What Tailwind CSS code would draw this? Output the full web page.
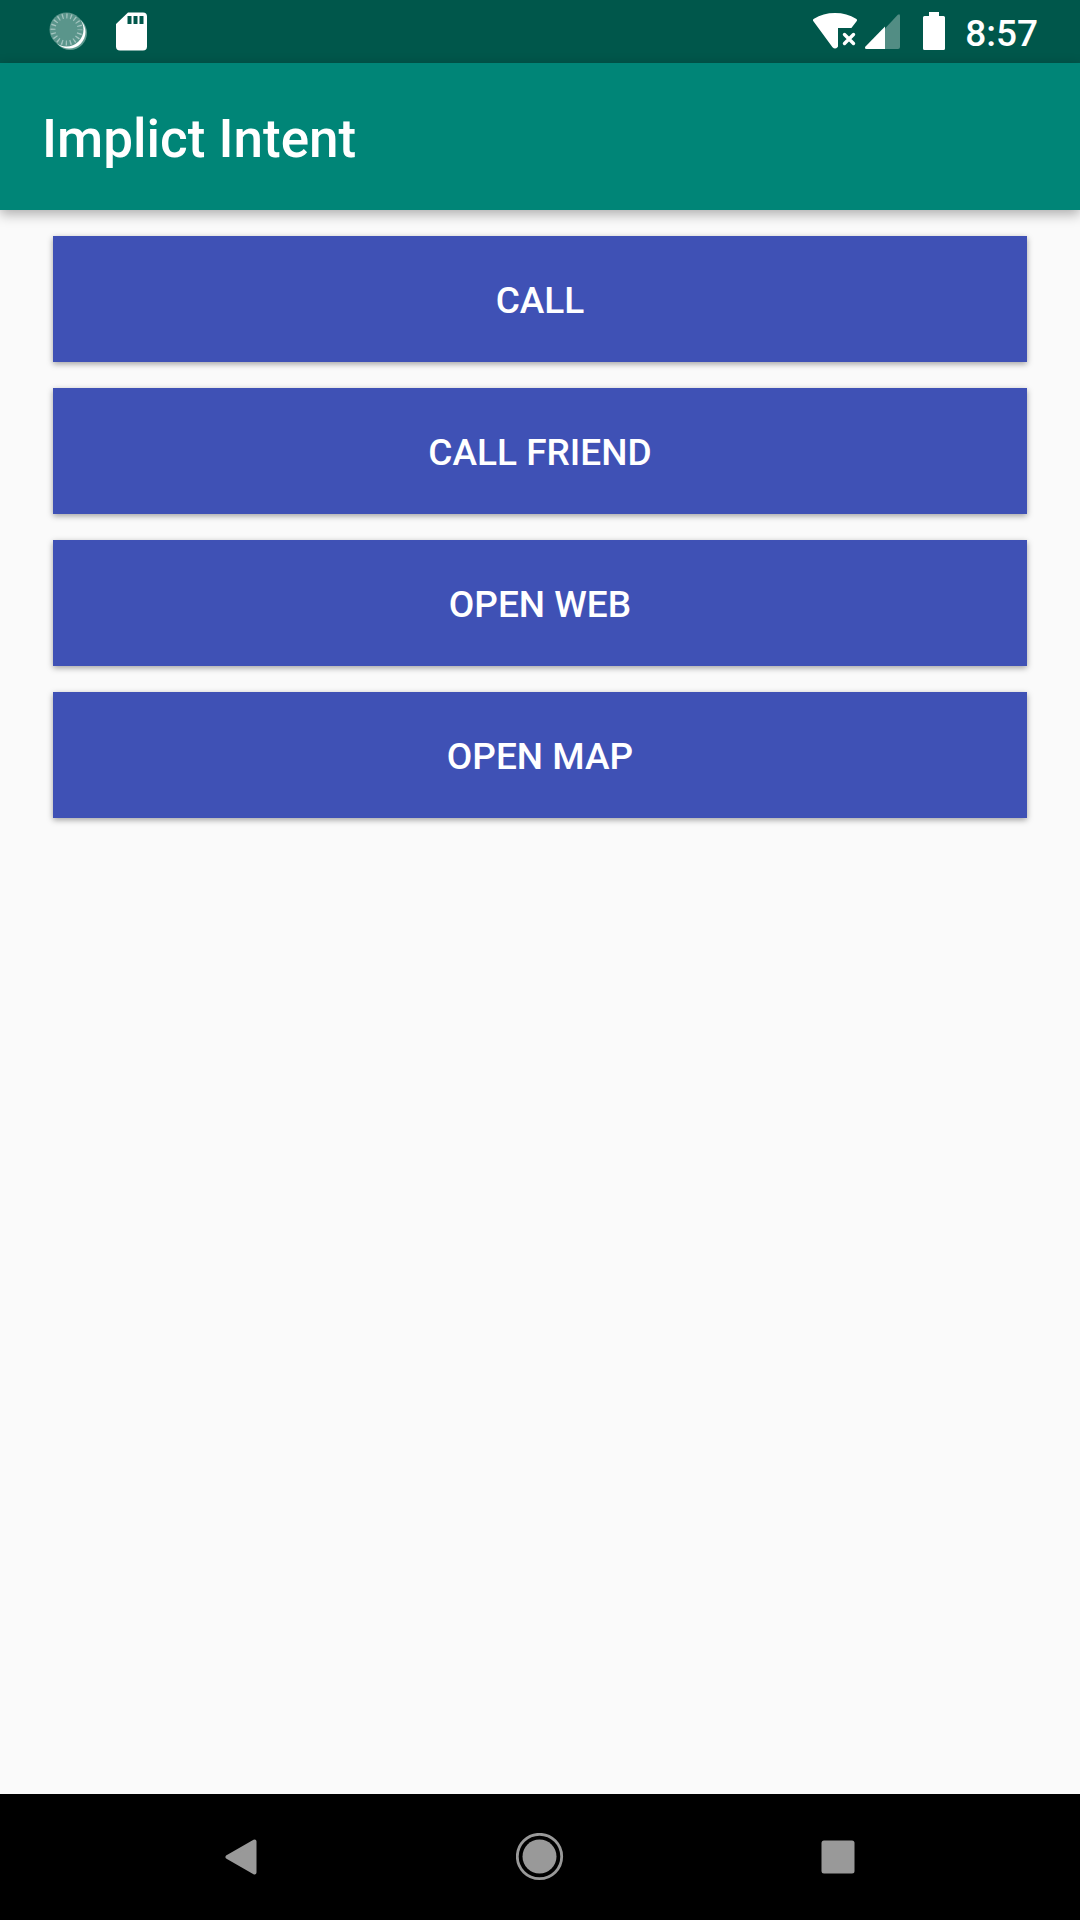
<!DOCTYPE html>
<html lang="en">
<head>
<meta charset="utf-8">
<meta name="viewport" content="width=device-width, initial-scale=1">
<title>Implict Intent</title>
<script src="https://cdn.jsdelivr.net/npm/@tailwindcss/browser@4"></script>
</head>
<body class="flex min-h-screen flex-col bg-[#fafafa] font-[Roboto,sans-serif] font-medium text-white">
  <div class="flex h-[63px] items-start justify-between bg-[#00574b] pl-12 pr-[42px]">
    <div class="flex">
      <svg class="h-[63px] w-[104px]" viewBox="48 0 104 63" role="img" aria-label="Sync and SD card">
        <circle cx="70" cy="33" r="17" fill="#5f9a90"/>
        <circle cx="69" cy="32" r="16.500" fill="#fff"/>
        <circle cx="66.500" cy="29.500" r="17" fill="#5a958b"/>
        <circle cx="66.500" cy="29.500" r="13.500" fill="none" stroke="#a3c4bf" stroke-width="5" stroke-dasharray="1.300 2.941" stroke-dashoffset=".65"/>
        <path fill="#fff" fill-rule="evenodd" d="M128 12.500h15a4 4 0 0 1 4 4v30a4 4 0 0 1-4 4h-23a4 4 0 0 1-4-4V24zM127.500 16v8h4v-8zM133.500 16v8h4v-8zM139.500 16v8h4v-8z"/>
      </svg>
    </div>
    <div class="flex">
      <svg class="h-[63px] w-[153px]" viewBox="812 0 153 63" role="img" aria-label="Wi-Fi without internet, mobile signal, battery full">
        <path fill="#fff" d="M813.600 21.500c-1-1.200-.8-2 .4-2.800C820 15 827 13 835 13s15 2 21 5.700c1.200.8 1.400 1.600.4 2.800l-5 6.500H838v18.500l-.5.700q-2.500 2.600-5 0z"/>
        <path d="m844.500 34.500 9 9m0-9-9 9" stroke="#fff" stroke-width="3.400" stroke-linecap="round"/>
        <path fill="#528d84" d="M885 28.600 897.800 14.700q2.200-1.500 2.200 1V47q0 2-2 2h-13z"/>
        <path fill="#fff" d="M885 26.500V49h-18.500q-2.500-.5-1-2.600z"/>
        <path fill="#fff" d="M929 12h10v4h4.500q1.500 0 1.500 1.500v31q0 1.500-1.500 1.500h-19q-1.500 0-1.500-1.500v-31q0-1.500 1.500-1.500h4.500z"/>
      </svg>
      <time class="text-[37px] leading-[68px]">8:57</time>
    </div>
  </div>
  <header class="flex h-[147px] items-center bg-[#008577] px-[42px] pt-1 shadow-[0_4px_12px_rgba(0,0,0,0.32)]">
    <h1 class="text-[53px] leading-[60px]">Implict Intent</h1>
  </header>
  <main class="flex grow flex-col gap-[26px] px-[53px] pt-[26px] text-[37px]">
    <button type="button" class="h-[126px] bg-[#3f51b5] pt-[3px] shadow-[0_2px_6px_rgba(0,0,0,0.36)]">CALL</button>
    <button type="button" class="h-[126px] bg-[#3f51b5] pt-[3px] shadow-[0_2px_6px_rgba(0,0,0,0.36)]">CALL FRIEND</button>
    <button type="button" class="h-[126px] bg-[#3f51b5] pt-[3px] shadow-[0_2px_6px_rgba(0,0,0,0.36)]">OPEN WEB</button>
    <button type="button" class="h-[126px] bg-[#3f51b5] pt-[3px] shadow-[0_2px_6px_rgba(0,0,0,0.36)]">OPEN MAP</button>
  </main>
  <nav class="grid h-[126px] grid-cols-3 bg-black px-[91px]" aria-label="System navigation">
    <button type="button" class="flex items-center justify-center" aria-label="Back">
      <svg class="size-12" viewBox="0 0 48 48"><path d="M10.500 24 37.500 8.500v31z" fill="#999" stroke="#999" stroke-width="4" stroke-linejoin="round"/></svg>
    </button>
    <button type="button" class="flex items-center justify-center" aria-label="Home">
      <svg class="size-12" viewBox="0 0 48 48"><circle cx="23.500" cy="23.500" r="22.200" fill="none" stroke="#999" stroke-width="2.800"/><circle cx="23.500" cy="23.500" r="17" fill="#999"/></svg>
    </button>
    <button type="button" class="flex items-center justify-center" aria-label="Recent apps">
      <svg class="size-12" viewBox="0 0 48 48"><rect x="6.500" y="7.500" width="33" height="33" rx="2.500" fill="#999"/></svg>
    </button>
  </nav>
</body>
</html>
